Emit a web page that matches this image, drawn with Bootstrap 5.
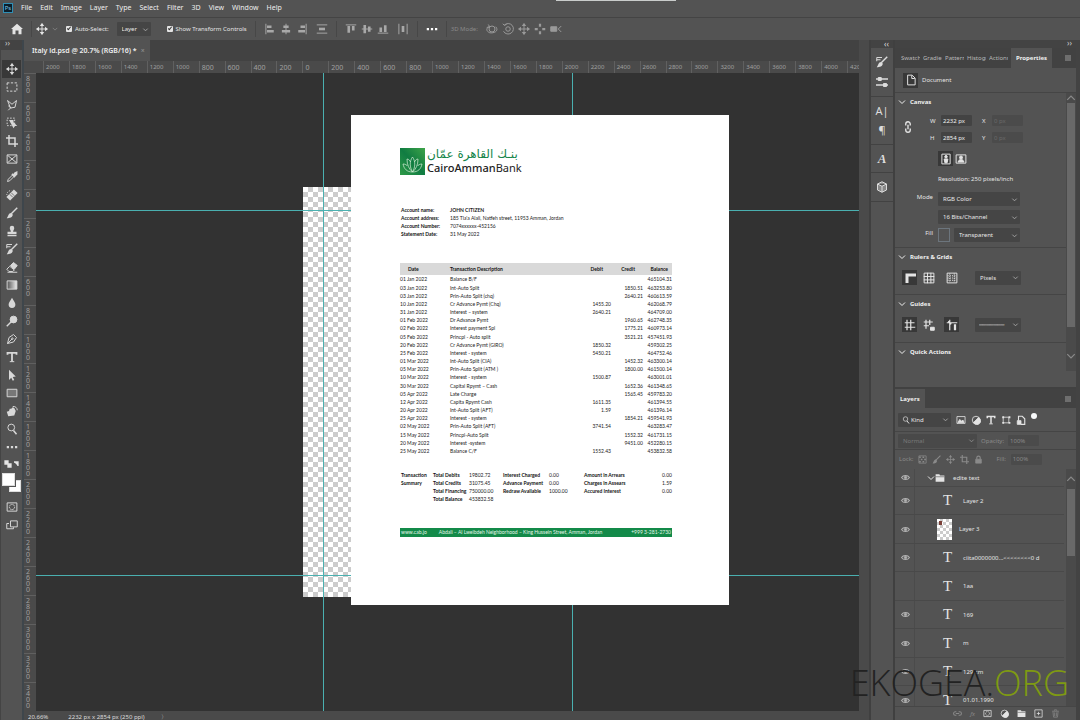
<!DOCTYPE html>
<html lang="en">
<head>
<meta charset="utf-8">
<meta name="viewport" content="width=device-width, initial-scale=1">
<title>Italy id.psd</title>
<link href="https://cdn.jsdelivr.net/npm/bootstrap@5.3.0/dist/css/bootstrap.min.css" rel="stylesheet">
<style>
:root{--ui:#535353;--edge:#434343;--well:#454545;--dark:#323232}
body{font-family:"Noto Sans","Open Sans",sans-serif;font-size:6px;line-height:10px;color:#e4e4e4;background:var(--edge)}
svg{display:block;fill:none;stroke:currentColor;stroke-width:1.3;flex:none}
.ic{width:12px;height:12px}
button{background:none;border:0;padding:0;color:inherit;font:inherit;line-height:inherit}
.bar-ui{background:var(--ui)}
.menu{height:18px;padding-left:3px;border-bottom:1px solid #444}
.menu a{font-size:7px;color:#eee;text-decoration:none;padding-right:1px;margin-right:7px}
.pslogo{width:10px;height:10px;background:#0b1e2c;border:1px solid #2f8fb5;color:#7cc8e8;line-height:8px;text-align:center;margin-right:8px}
.strip{left:556px;top:0;width:120px;height:1px;background:#c9cccb}
.options{height:23px;padding-left:11px}
.options .rule{width:1px;height:16px;background:#474747}
input[type=checkbox]{width:6px;height:6px;margin:0 3px 0 0;appearance:none;background:#e4e4e4;border-radius:1px;position:relative}
input[type=checkbox]:checked::after{content:"";position:absolute;left:2px;top:0;width:2px;height:4px;border:solid #333;border-width:0 1px 1px 0;transform:rotate(40deg)}
.pick{appearance:none;height:14px;border:0;border-radius:1px;padding:0 10px 0 5px;color:#e8e8e8;font:inherit;background:var(--well) url("data:image/svg+xml,%3Csvg xmlns='http://www.w3.org/2000/svg' viewBox='0 0 8 8'%3E%3Cpath d='M1.500 3l2.500 2.500L6.500 3' fill='none' stroke='%23aaa'/%3E%3C/svg%3E") no-repeat right 2px center/7px}
.dim{color:#8a8a8a!important}
.tools{width:24px;border-right:2px solid #3e464c;border-left:1px solid #444}
.grip{height:8px;background:var(--edge);color:#ccc;font-size:8px;line-height:6px}
.tools .grip{height:10px;margin-bottom:10px}
.tools button{width:19px;height:18px;display:flex;align-items:center;justify-content:center;color:#d8d8d8}
.tools button.on,.on{background:#383838}
.swatches{width:19px;height:22px;position:relative}
.swatches i{position:absolute;width:12px;height:12px;background:#fff;border:1px solid #ddd;left:7px;top:8px}
.swatches i+i{left:0;top:1px;width:13px;height:13px;box-shadow:0 0 0 1px var(--ui)}
.tabs{height:21px;background:#424242}
.doc-tab{background:var(--ui);padding:0 5px 0 8px;font-size:7px;font-weight:600;color:#eee}
.hruler{height:12px;background:#4a4a4a;color:#a0a0a0;overflow:hidden;padding-left:19px}
.hruler>div{margin-right:-14px}
.hruler span{flex:1 1 0;border-left:1px solid #606060;padding-left:2px;line-height:13px;min-width:0}
.hruler .big,.vruler span{font-size:7px}
.vruler{width:12px;background:#4a4a4a;color:#a0a0a0;overflow:hidden}
.vruler span{flex:1 1 0;border-top:1px solid #606060;min-height:0;line-height:6px;text-align:center;padding:2px 4px 0 0}
.vruler b{display:block;font-weight:400}
.work{background:var(--dark);overflow:hidden}
.checks{left:267px;top:114px;width:290px;height:410px;background:#fff repeating-conic-gradient(#ccc 0 25%,#fff 0 50%) 0 0/10px 10px}
.sheet{left:315px;top:42px;width:378px;height:490px;background:#fff;color:#222;font-family:Lato,"Noto Sans",sans-serif;font-size:5px;line-height:8px;padding:33px 57px 0 49px}
.guide-v{top:0;bottom:0;width:1px;background:#4ab0b0}
.guide-h{left:0;right:0;height:1px;background:#4ab0b0}
.brand-text{font-family:"Noto Sans",sans-serif;margin-left:2px;color:#222;font-size:11px;line-height:13px}
.brand-text b{font-weight:500}
.brand-ar{font-family:"DejaVu Sans",sans-serif;color:#16854a;font-size:12px;line-height:13px;white-space:nowrap;padding-right:4px}
.who{margin-top:31px;display:grid;grid-template-columns:49px auto;padding-left:1px}
.who dt,.who dd,.sum dt,.sum dd{margin:0}
.who dt,.sum dt{font-weight:700;color:#111}
.ledger{width:100%;height:192px;margin-top:25px;table-layout:fixed;border-collapse:collapse}
.ledger td,.ledger th{padding:0;white-space:nowrap}
.ledger th{background:#d9d9d9;height:12px;color:#111}
.sum{display:grid;grid-template-columns:32px 36px 34px 46px 35px 60px 1fr;margin:16px 0 0 1px}
.sheet-foot{background:#138a49;color:#e4f6ea;height:9px;line-height:9px;margin-top:25px;padding:0 1px}
.status{height:9px;background:#4a4a4a;line-height:13px;overflow:hidden;color:#ddd}
.gutter{width:12px;background:#4a4a4a;border-right:2px solid #404040}
.dock{width:24px;border-right:2px solid #404040}
.dock>div{border-bottom:1px solid #424242;display:flex;flex-direction:column;align-items:center;justify-content:space-evenly;color:#ddd}
.panel{width:181px;background:var(--ui)}
.props{height:339px;flex:none}
.ptabs{height:20px;background:#424242;color:#b8b8b8;padding-left:6px}
.ptabs button{width:19px;margin-right:3px;overflow:hidden;text-align:left;white-space:nowrap}
.ptabs .cur{background:var(--ui);color:#f0f0f0;font-weight:700;width:auto;padding:0 5px;margin:0}
.sect{border-bottom:1px solid #454545;padding-left:3px}
.sect h2{font-size:6px;line-height:10px;font-weight:700;margin:0;color:#f0f0f0;display:flex;align-items:center;gap:4px}
.num{width:31px;height:11px;border:0;background:#434343;color:#eee;font:inherit;padding:0 2px;border-radius:1px}
.num:disabled{background:#4b4b4b;color:#6a6a6a}
.size-grid{grid-template-columns:11px 41px 10px 34px;row-gap:6px;padding-top:4px}
.mode-grid{grid-template-columns:20px 82px;padding-left:15px;column-gap:5px;row-gap:4px}
.tile{width:15px;height:15px;display:flex;align-items:center;justify-content:center}
.track{width:10px;background:#4a4a4a}
.thumb{background:#696969;width:8px;margin-left:1px}
.rule-line{padding-left:4px;font-family:"DejaVu Sans",sans-serif}
.layer{height:29px;border-bottom:1px solid #494949;margin-right:2px}
.layer:nth-child(even){height:28px}
.layer.group{height:18px}
.layer .eye{width:20px;padding-left:2px;height:100%;border-right:1px solid #4b4b4b;display:flex;align-items:center;justify-content:center;color:#b4b4b4}
.tee{font-family:"Liberation Serif",serif;font-size:15px;line-height:15px;width:13px;text-align:center;margin:0 9px 0 26px}
.pic{width:15px;height:21px;margin:0 7px 0 22px;background:#fff repeating-conic-gradient(#ccc 0 25%,#fff 0 50%) 0 0/6px 6px}
.pic::before{content:"";display:block;width:3px;height:4px;background:#7a4038;margin:2px}
.gap-5px{gap:5px}
.mark-site{right:11px;bottom:15px;font-family:"Open Sans",sans-serif;font-weight:300;font-size:36px;line-height:44px;color:#222}
.mark-site span{color:#7f9a12}
</style>
</head>
<body class="vh-100 d-flex flex-column overflow-hidden position-relative">
<svg width="0" height="0" class="position-absolute"><defs>
<symbol id="move" viewBox="0 0 16 16"><path d="M8 1v14M1 8h14"/><path fill="currentColor" stroke="none" d="M8 0l3 4H5zM8 16l3-4H5zM0 8l4-3v6zM16 8l-4-3v6z"/></symbol>
<symbol id="slide" viewBox="0 0 16 16"><path stroke-width="3" d="M8 1v4M8 11v4M1 8h4M11 8h4"/></symbol>
<symbol id="marq" viewBox="0 0 16 16"><path stroke-dasharray="3 2" d="M1.500 2.500h13v11h-13z"/></symbol>
<symbol id="lasso" viewBox="0 0 16 16"><path d="M2 2l6 5 6-5-2 9-6 1zM6 12l-3 3M3 9l4 3"/></symbol>
<symbol id="objsel" viewBox="0 0 16 16"><path stroke-dasharray="2 2" d="M1.500 1.500h10v10h-10z"/><path fill="currentColor" stroke="none" d="M4 4h6v3l5 5-3 0-2 3z"/></symbol>
<symbol id="crop" viewBox="0 0 16 16"><path stroke-width="2" d="M4 0v12h12M0 4h12v12"/></symbol>
<symbol id="frame" viewBox="0 0 16 16"><path d="M1.500 2.500h13v11h-13zM2 3l12 10M14 3L2 13"/></symbol>
<symbol id="drop" viewBox="0 0 16 16"><path d="M2 14l1-3 6-6 2 2-6 6z"/><path fill="currentColor" d="M8 4l4 4M10 6l2-3 2-1 0 2-3 3z" stroke-width="2.500"/></symbol>
<symbol id="heal" viewBox="0 0 16 16"><path stroke-width="7" d="M3 13L13 3"/><path stroke="#555" stroke-width="1" d="M5 7l4 4M7 5l4 4"/><path stroke-dasharray="1.500 1.500" d="M1 8a6 6 0 016-6"/></symbol>
<symbol id="brush" viewBox="0 0 16 16"><path stroke-width="2" d="M15 1L7 9"/><path fill="currentColor" stroke="none" d="M7 8l2 2c0 4-4 5-8 5 2-2 2-7 6-7z"/></symbol>
<symbol id="stamp" viewBox="0 0 16 16"><path fill="currentColor" stroke="none" d="M8 1a3 3 0 013 3c0 2-1.500 3-1.500 5H14v3H2V9h4.500C6.500 7 5 6 5 4a3 3 0 013-3zM2 13h12v2H2z"/></symbol>
<symbol id="hist" viewBox="0 0 16 16"><use href="#brush"/><path d="M1 2h7M1 5h5M1 2v5"/></symbol>
<symbol id="erase" viewBox="0 0 16 16"><path d="M1 11l4-4 6 5-2 2H4z"/><path fill="currentColor" d="M6 6l4-4 5 4-4 5zM2 15h13"/></symbol>
<linearGradient id="gg"><stop stop-color="#555"/><stop offset="1" stop-color="#eee"/></linearGradient>
<symbol id="grad" viewBox="0 0 16 16"><path fill="url(#gg)" d="M1.500 2.500h13v11h-13z"/></symbol>
<symbol id="blur" viewBox="0 0 16 16"><path fill="currentColor" stroke="none" d="M8 1c2 4 4.500 6 4.500 9a4.500 4.500 0 01-9 0C3.500 7 6 5 8 1z"/></symbol>
<symbol id="dodge" viewBox="0 0 16 16"><circle cx="10" cy="6" r="4.500" fill="currentColor"/><path stroke-width="2" d="M7 9l-6 6"/></symbol>
<symbol id="pen" viewBox="0 0 16 16"><path d="M2 14l2-8 6-4 4 4-4 6zM2 14l6-6"/><circle cx="8.500" cy="7.500" r="1"/></symbol>
<symbol id="type" viewBox="0 0 16 16"><path stroke-width="2.400" d="M2 5V2.500h12V5M8 3v11"/><path d="M5 14.200h6"/></symbol>
<symbol id="arrow" viewBox="0 0 16 16"><path fill="currentColor" stroke="none" d="M4 1l9 9-4 .5 2 4-2 1-2-4-3 3z"/></symbol>
<symbol id="rect" viewBox="0 0 16 16"><path fill="#777" d="M1.500 3h13v10h-13z"/></symbol>
<symbol id="hand" viewBox="0 0 16 16"><path fill="currentColor" stroke="none" d="M3 15L1 9l3-1 1-3 2 0 2-2 2 1 2 4-2 6z"/><path d="M9 2a5 5 0 016 5"/></symbol>
<symbol id="lens" viewBox="0 0 16 16"><circle cx="7" cy="6" r="4.500"/><path stroke-width="2" d="M10 10l4 5"/></symbol>
<symbol id="dots" viewBox="0 0 16 16"><path stroke-width="3" stroke-dasharray="3 2.500" d="M1 8h15"/></symbol>
<symbol id="mask" viewBox="0 0 16 16"><path d="M1.500 2.500h13v11h-13z"/><circle cx="8" cy="8" r="3.500" stroke-dasharray="2 1"/></symbol>
<symbol id="screen" viewBox="0 0 16 16"><path d="M6 2.500h9v8H6zM4 6H1v7h9v-2"/></symbol>
<symbol id="home" viewBox="0 0 16 16"><path fill="currentColor" stroke="none" d="M8 1l8 7h-2v7h-4v-5H6v5H2V8H0z"/></symbol>
<symbol id="al" viewBox="0 0 16 16"><path d="M2.500 1v14"/><path stroke-width="3.500" d="M4 5h6M4 11h9"/></symbol>
<symbol id="ac" viewBox="0 0 16 16"><path d="M8 1v14"/><path stroke-width="3.500" d="M4.500 5h7M2.500 11h11"/></symbol>
<symbol id="dist" viewBox="0 0 16 16"><path d="M1 2.500h14M1 13.500h14"/><path stroke-width="3.500" d="M4 8h8"/></symbol>
<symbol id="orbit" viewBox="0 0 16 16"><circle cx="8" cy="8" r="4"/><path d="M13 5c5 6-3 9-8 8-5-2-5-6-1-8M3 2l2 3-4 1"/></symbol>
<symbol id="roll" viewBox="0 0 16 16"><circle cx="8" cy="8" r="3"/><path d="M3 3a7 7 0 11-1 8M1 1l2 2 3-1"/></symbol>
<symbol id="cam" viewBox="0 0 16 16"><path fill="currentColor" d="M1 5h8v6H1z"/><path d="M15 4l-4 4 4 4"/></symbol>
<symbol id="chev" viewBox="0 0 8 8"><path stroke-width="1" d="M1 2.500l3 3 3-3"/></symbol>
<symbol id="page" viewBox="0 0 16 16"><path d="M3.500 1.500h6l4 4v9h-10zM9 2v4h4"/></symbol>
<symbol id="eye" viewBox="0 0 16 16"><path stroke-width="1.800" d="M1 8c3-5 11-5 14 0-3 5-11 5-14 0z"/><circle cx="8" cy="8" r="2.200" fill="currentColor"/></symbol>
<symbol id="fold" viewBox="0 0 16 16"><path fill="currentColor" stroke="none" d="M1 2h6l1 2h7v10H1z"/><path stroke="#555" stroke-width="1" d="M1 6h14"/></symbol>
<symbol id="grid" viewBox="0 0 16 16"><path d="M1.500 1.500h13v13h-13zM6 1v14M10.500 1v14M1 6h14M1 10.500h14"/></symbol>
<symbol id="pixgrid" viewBox="0 0 16 16"><path d="M1.500 1.500h13v13h-13z"/><path stroke-dasharray="1.500 1.500" d="M2 5h12M2 8h12M2 11h12M5 2v12M11 2v12"/></symbol>
<symbol id="hash" viewBox="0 0 16 16"><path stroke-width="1.600" d="M4 1v14M9 1v14M1 5h13M1 11h14"/></symbol>
<symbol id="hashlock" viewBox="0 0 16 16"><path stroke-width="1.600" d="M4 1v12M9 1v7M1 4h12M1 9h7"/><path fill="currentColor" d="M10 11h5v4h-5z"/></symbol>
<symbol id="smart" viewBox="0 0 16 16"><path stroke-width="1.600" d="M5 1v14M1 5h14M3 3l4 4"/><path stroke-width="3" d="M12 7v8"/></symbol>
<symbol id="lock" viewBox="0 0 16 16"><path stroke-width="2" d="M5 8V5a3 3 0 016 0v3"/><path fill="currentColor" d="M3 7.500h10v7H3z"/></symbol>
<symbol id="smartobj" viewBox="0 0 16 16"><path stroke-width="1.800" d="M4 9V2h6l4 4v9H8"/><path fill="currentColor" d="M2 9h6v6H2z"/></symbol>
<symbol id="half" viewBox="0 0 16 16"><circle cx="8" cy="8" r="6"/><path fill="currentColor" d="M12 4a6 6 0 11-8 8z"/></symbol>
<symbol id="image" viewBox="0 0 16 16"><path d="M1.500 2.500h13v11h-13z"/><path fill="currentColor" d="M3 12l3-5 3 3 2-2 2 4z"/></symbol>
<symbol id="shape" viewBox="0 0 16 16"><path d="M3.500 3.500h9v9h-9z"/><path stroke-width="3" stroke-dasharray="3 7" d="M2 3.500h13M2 12.500h13"/></symbol>
<symbol id="check" viewBox="0 0 16 16"><path d="M1.500 1.500h13v13h-13z"/><path stroke-width="3" stroke-dasharray="3 3" d="M2 4h12M5 8h9M2 12h12"/></symbol>
<symbol id="cube" viewBox="0 0 16 16"><path fill="#888" d="M8 1l6 3v8l-6 3-6-3V4zM2 4l6 3 6-3M8 7v8"/></symbol>
<symbol id="link" viewBox="0 0 16 16"><path stroke-width="1.800" d="M6 5H4a3 3 0 000 6h2M10 5h2a3 3 0 010 6h-2M5 8h6"/></symbol>
<symbol id="trash" viewBox="0 0 16 16"><path d="M2 4h12M6 3V1.500h4V3M3.500 5l1 9.500h7l1-9.500M6.500 6v7M9.500 6v7"/></symbol>
<symbol id="plus" viewBox="0 0 16 16"><path d="M1.500 1.500h13v13h-13zM8 5v6M5 8h6"/></symbol>
<symbol id="man" viewBox="0 0 16 16"><path d="M2.500 1.500h11v13h-11z"/><circle cx="8" cy="5" r="1.700" fill="currentColor"/><path fill="currentColor" d="M5.500 8h5l-1 5h-3z"/></symbol>
<symbol id="bust" viewBox="0 0 16 16"><path d="M1.500 2.500h13v11h-13z"/><circle cx="8" cy="6" r="2" fill="currentColor"/><path fill="currentColor" d="M4 12l2-3h4l2 3z"/></symbol>
<symbol id="slid" viewBox="0 0 16 16"><path stroke-width="1.800" d="M0 4h16M0 12h16"/><path fill="currentColor" d="M3 2h4v4H3zM10 10h4v4h-4z"/></symbol>
<symbol id="burger" viewBox="0 0 16 16"><path stroke-width="1.500" d="M2 4h12M2 8h12M2 12h12"/></symbol>
</defs></svg>

<nav class="menu bar-ui d-flex align-items-center">
<span class="pslogo">Ps</span><a href="#">File</a><a href="#">Edit</a><a href="#">Image</a><a href="#">Layer</a><a href="#">Type</a><a href="#">Select</a><a href="#">Filter</a><a href="#">3D</a><a href="#">View</a><a href="#">Window</a><a href="#">Help</a>
</nav>
<div class="strip position-absolute"></div>

<div class="options bar-ui d-flex align-items-center">
<button aria-label="Home"><svg class="ic"><use href="#home"/></svg></button>
<span class="rule ms-2 me-1"></span>
<svg class="ic"><use href="#move"/></svg><svg width="6" height="6" class="ms-1 dim"><use href="#chev"/></svg>
<label class="d-flex align-items-center ms-2"><input type="checkbox" checked>Auto-Select:</label>
<select class="pick ms-2" aria-label="Auto-select target" style="width:34px"><option>Layer</option></select>
<label class="d-flex align-items-center ms-3"><input type="checkbox" checked>Show Transform Controls</label>
<span class="rule ms-2"></span>
<div class="d-flex align-items-center ms-2 gap-1" style="color:#a8a8a8">
<button aria-label="Align left"><svg class="ic"><use href="#al"/></svg></button>
<button aria-label="Align centre"><svg class="ic"><use href="#ac"/></svg></button>
<button aria-label="Align right"><svg class="ic" style="transform:scaleX(-1)"><use href="#al"/></svg></button>
<button aria-label="Distribute" class="ms-1"><svg class="ic"><use href="#dist"/></svg></button>
<span class="rule mx-1"></span>
<button aria-label="Align top"><svg class="ic" style="transform:rotate(90deg)"><use href="#al"/></svg></button>
<button aria-label="Align middle"><svg class="ic" style="transform:rotate(90deg)"><use href="#ac"/></svg></button>
<button aria-label="Align bottom"><svg class="ic" style="transform:rotate(-90deg)"><use href="#al"/></svg></button>
<button aria-label="Distribute across" class="ms-1"><svg class="ic" style="transform:rotate(90deg)"><use href="#dist"/></svg></button>
<span class="rule mx-1"></span>
<button aria-label="More" class="text-white"><svg class="ic"><use href="#dots"/></svg></button>
</div>
<span class="rule ms-2 me-1"></span>
<span class="dim">3D Mode:</span>
<div class="d-flex gap-1 ms-2" style="color:#9a9a9a"><svg class="ic"><use href="#orbit"/></svg><svg class="ic"><use href="#roll"/></svg><svg class="ic"><use href="#move"/></svg><svg class="ic"><use href="#slide"/></svg><svg class="ic"><use href="#cam"/></svg></div>
</div>

<main class="d-flex flex-fill" style="min-height:0">
<aside class="tools bar-ui d-flex flex-column align-items-center" id="tools">
<div class="grip w-100 ps-1">››</div>
<button class="on" aria-label="Move"><svg class="ic"><use href="#move"/></svg></button>
</aside>

<section class="flex-fill d-flex flex-column" style="min-width:0">
<div class="tabs d-flex"><div class="doc-tab d-flex align-items-center">Italy id.psd @ 20.7% (RGB/16) *<button class="dim ms-1" aria-label="Close">×</button></div></div>
<div class="hruler"><div class="d-flex" id="hr"></div></div>
<div class="d-flex flex-fill" style="min-height:0">
<div class="vruler d-flex flex-column" id="vr"></div>
<div class="work position-relative flex-fill">
<div class="checks position-absolute"></div>
<div class="guide-v position-absolute" style="left:287px"></div><div class="guide-v position-absolute" style="left:536px"></div>
<div class="guide-h position-absolute" style="top:137px"></div><div class="guide-h position-absolute" style="top:502px"></div>
<article class="sheet position-absolute">
<div class="d-flex">
<svg width="25" height="27" viewBox="0 0 25 27"><defs><linearGradient id="lg" x1="1" y1="0" x2="0" y2="1"><stop stop-color="#3ea449"/><stop offset=".5" stop-color="#107c42"/><stop offset="1" stop-color="#2f9a48"/></linearGradient></defs><path fill="url(#lg)" stroke="none" d="M0 0h25v27H0z"/><path stroke="#d9efd9" stroke-width=".7" d="M12.500 9c3 4 3 10 0 15-3-5-3-11 0-15zM7 11c0 6 2 10 5.500 13M18 11c0 6-2 10-5.500 13M7 11c2 0 3 2 3.500 3M18 11c-2 0-3 2-3.500 3M3 16c1 5 4 8 9.500 8 5.500 0 8.500-3 9.500-8-2 0-4 1-4.500 2M3 16c2 0 4 1 4.500 2"/></svg>
<div class="brand-text"><div class="brand-ar" lang="ar" dir="rtl">بنـك القاهرة عمّان</div><b>CairoAmman</b>Bank</div>
</div>
<dl class="who mb-0"><dt>Account name:</dt><dd><b>JOHN CITIZEN</b></dd><dt>Account address:</dt><dd>185 Tla'a Alali, Natfeh street, 11953 Amman, Jordan</dd><dt>Account Number:</dt><dd>7074xxxxxx-452156</dd><dt>Statement Date:</dt><dd>31 May 2022</dd></dl>
<table class="ledger"><colgroup><col style="width:50px"><col style="width:121px"><col style="width:40px"><col style="width:32px"><col></colgroup>
<thead><tr><th class="ps-2">Date</th><th>Transaction Description</th><th class="text-end pe-2">Debit</th><th class="text-end pe-2">Credit</th><th class="text-end pe-1">Balance</th></tr></thead><tbody id="rows"></tbody></table>
<dl class="sum mb-0"><dt>Transaction</dt><dt>Total Debits</dt><dd>19802.72</dd><dt>Interest Charged</dt><dd>0.00</dd><dt>Amount in Arrears</dt><dd class="text-end">0.00</dd>
<dt>Summary</dt><dt>Total Credits</dt><dd>31075.45</dd><dt>Advance Payment</dt><dd>0.00</dd><dt>Charges in Assears</dt><dd class="text-end">1.59</dd>
<dt></dt><dt>Total Financing</dt><dd>750000.00</dd><dt>Redraw Available</dt><dd>1000.00</dd><dt>Accured Interest</dt><dd class="text-end">0.00</dd>
<dt></dt><dt>Total Balance</dt><dd>453832.58</dd></dl>
<div class="sheet-foot d-flex"><span>www.cab.jo</span><span class="ms-2 ps-1">Abdali – Al Lweibdeh Neighborhood – King Hussein Street, Amman, Jordan</span><span class="ms-auto">+999 3-281-2730</span></div>
</article>
</div>
</div>
<div class="status d-flex"><span class="ps-1">20.66%</span><span class="ms-3 ps-1">2232 px x 2854 px (250 ppi)</span><span class="ms-3">〉</span></div>
</section>

<div class="gutter"></div>
<div class="dock bar-ui"><div class="grip border-0 align-items-end pe-1">‹‹</div>
<div style="height:49px"><svg class="ic"><use href="#hist"/></svg><svg class="ic"><use href="#slid"/></svg></div>
<div style="height:48px;font-size:11px"><span>A|</span><span>¶</span></div>
<div style="height:28px;font:italic bold 13px 'Liberation Serif',serif"><span>A</span></div>
<div style="height:29px"><svg class="ic"><use href="#cube"/></svg></div></div>

<aside class="d-flex flex-column" style="min-height:0">
<div class="grip text-end pe-1">››</div>
<section class="panel props d-flex flex-column">
<div class="ptabs d-flex"><button>Swatches</button><button>Gradients</button><button>Patterns</button><button>Histogram</button><button>Actions</button><button class="cur">Properties</button><svg class="ms-auto me-1 align-self-center" width="8" height="8"><use href="#burger"/></svg></div>
<div class="sect d-flex align-items-center ps-2" style="height:25px"><span class="tile on me-1"><svg class="ic"><use href="#page"/></svg></span>Document</div>
<div class="d-flex flex-fill"><div class="flex-fill">
<div class="sect pt-1" style="height:155px"><h2><svg width="8" height="8"><use href="#chev"/></svg>Canvas</h2>
<div class="d-flex pt-1"><svg class="ic align-self-center ms-1 me-1" style="transform:rotate(90deg)"><use href="#link"/></svg>
<div class="size-grid d-grid ms-2 ps-1 align-items-center"><label for="w">W</label><input id="w" class="num" value="2232 px"><label for="x">X</label><input id="x" class="num" value="0 px" disabled><label for="h">H</label><input id="h" class="num" value="2854 px"><label for="y">Y</label><input id="y" class="num" value="0 px" disabled></div></div>
<div style="padding-left:40px"><div class="d-flex mt-2"><button class="tile on" aria-label="Portrait"><svg class="ic"><use href="#man"/></svg></button><button class="tile" aria-label="Landscape"><svg class="ic"><use href="#bust"/></svg></button></div>
<div class="mt-2">Resolution: 250 pixels/inch</div></div>
<div class="mode-grid d-grid mt-2"><label for="mode" class="text-end">Mode</label><select id="mode" class="pick"><option>RGB Color</option></select><span></span><select class="pick" aria-label="Depth"><option>16 Bits/Channel</option></select><label for="fill" class="text-end">Fill</label><div class="d-flex"><span class="border border-secondary me-1" style="width:12px"></span><select id="fill" class="pick flex-fill"><option>Transparent</option></select></div></div>
</div>
<div class="sect pt-1" style="height:47px"><h2><svg width="8" height="8"><use href="#chev"/></svg>Rulers &amp; Grids</h2>
<div class="d-flex align-items-center ps-1 mt-2"><span class="tile on"><svg class="ic"><path stroke-width="3" d="M3 11V3h9"/></svg></span><span class="tile ms-1 me-2"><svg class="ic"><use href="#grid"/></svg></span><span class="tile"><svg class="ic"><use href="#pixgrid"/></svg></span><select class="pick ms-3" style="width:46px" aria-label="Units"><option>Pixels</option></select></div></div>
<div class="sect pt-1" style="height:48px"><h2><svg width="8" height="8"><use href="#chev"/></svg>Guides</h2>
<div class="d-flex align-items-center ps-1 mt-2"><span class="tile on"><svg class="ic"><use href="#hash"/></svg></span><span class="tile ms-1 me-2"><svg class="ic"><use href="#hashlock"/></svg></span><span class="tile on"><svg class="ic"><use href="#smart"/></svg></span><select class="pick rule-line ms-3" style="width:46px" aria-label="Line style"><option>───────</option></select></div></div>
<div class="sect border-0 pt-1"><h2><svg width="8" height="8"><use href="#chev"/></svg>Quick Actions</h2></div>
</div>
<div class="track mb-3"><svg width="10" height="10" style="transform:scaleY(-1)" class="dim"><use href="#chev"/></svg><div class="thumb" style="height:224px"></div><svg width="10" height="10" class="dim mt-4"><use href="#chev"/></svg></div></div>
</section>
<section class="panel d-flex flex-column flex-fill" style="min-height:0;border-top:2px solid #414141">
<div class="ptabs ps-0 d-flex"><button class="cur">Layers</button><svg class="ms-auto me-1 align-self-center" width="8" height="8"><use href="#burger"/></svg></div>
<div class="sect d-flex align-items-center gap-5px" style="height:25px"><svg width="8" height="8" class="position-absolute ms-1"><use href="#lens"/></svg><select class="pick" style="width:53px;padding-left:13px" aria-label="Filter kind"><option>Kind</option></select><svg width="10" height="10"><use href="#image"/></svg><svg width="10" height="10"><use href="#half"/></svg><svg width="10" height="10"><use href="#type"/></svg><svg width="10" height="10"><use href="#shape"/></svg><svg width="10" height="10"><use href="#smartobj"/></svg><span class="rounded-circle bg-light mb-2" style="width:6px;height:6px"></span></div>
<div class="sect d-flex align-items-center dim" style="height:18px"><select class="pick dim" disabled style="width:79px;opacity:.7" aria-label="Blend mode"><option>Normal</option></select><label class="ms-1 me-1" for="op">Opacity:</label><input id="op" class="num dim" disabled value="100%"></div>
<div class="d-flex align-items-center dim ps-1" style="height:20px;gap:1px"><span>Lock:</span><svg width="9" height="9" class="ms-1"><use href="#check"/></svg><svg width="9" height="9" class="ms-1"><use href="#brush"/></svg><svg width="9" height="9" class="ms-1"><use href="#move"/></svg><svg width="9" height="9" class="ms-1"><use href="#crop"/></svg><svg width="9" height="9" class="ms-1"><use href="#lock"/></svg><label for="fl" class="ms-2 ps-1 me-1">Fill:</label><input id="fl" class="num dim" disabled value="100%"></div>
<div class="d-flex flex-fill overflow-hidden" style="min-height:0"><div class="flex-fill" id="layers">
<div class="layer group d-flex align-items-center"><span class="eye"><svg width="9" height="9"><use href="#eye"/></svg></span><svg class="ms-2 ps-1" width="12" height="8"><use href="#chev"/></svg><svg width="10" height="10" class="me-2"><use href="#fold"/></svg>edite text</div></div>
<div class="track"><svg width="10" height="20" style="transform:scaleY(-1)" class="dim"><use href="#chev"/></svg><div class="thumb" style="height:67px"></div></div></div>
<div class="d-flex align-items-center justify-content-end gap-2 pe-3 flex-shrink-0" style="height:14px;border-top:1px solid #464646"><svg class="dim" width="9" height="9"><use href="#link"/></svg><i class="dim">fx</i><svg width="9" height="9"><use href="#mask"/></svg><svg width="9" height="9"><use href="#half"/></svg><svg width="9" height="9"><use href="#fold"/></svg><svg width="9" height="9"><use href="#plus"/></svg><svg class="dim" width="9" height="9"><use href="#trash"/></svg></div>
</section>
</aside>
<div style="width:4px"></div>
</main>
<div class="mark-site position-absolute">EKOGEA.<span>ORG</span></div>

<script>
const add=(id,html)=>document.getElementById(id).insertAdjacentHTML('beforeend',html);
const tools='marq lasso objsel crop frame drop heal brush stamp hist erase grad blur dodge pen type arrow rect hand lens dots'.split(' ');
const btn=t=>`<button aria-label="${t}"><svg class="ic"><use href="#${t}"/></svg></button>`;
add('tools',tools.map(btn).join('')+'<svg width="16" height="8" class="mt-1"><path fill="currentColor" d="M1 1h3v3H1zM4 4h3v3H4zM10 2h4v4"/></svg><div class="swatches mt-1 mb-1"><i></i><i></i></div>'+btn('mask')+btn('screen'));
for(let v=-2000;v<=4200;v+=200){const a=Math.abs(v);add('hr',`<span class="${a<1000?'big':''}">${a}</span>`)}
for(let v=-800;v<=3400;v+=200)add('vr','<span>'+[...String(Math.abs(v))].map(c=>`<b>${c}</b>`).join('')+'</span>');
const rows=`01 Jan 2022|Balance B/F|||465104.31
03 Jan 2022|Int-Auto Split||1850.51|463253.80
03 Jan 2022|Prin-Auto Split (chq)||2640.21|460613.59
10 Jan 2022|Cr Advance Pymt (Chq)|1455.20||462068.79
31 Jan 2022|Interest – system|2640.21||464709.00
01 Feb 2022|Dr Advance Pymt||1960.65|462748.35
02 Feb 2022|Interest payment Spl||1775.21|460973.14
05 Feb 2022|Princpl  - Auto split||3521.21|457451.93
20 Feb 2022|Cr Advance Pymt (GIRO)|1850.32||459302.25
25 Feb 2022|Interest  - system|5450.21||464752.46
01 Mar 2022|Int-Auto Split (CIA)||1452.32|463300.14
05 Mar 2022|Prin-Auto Split (ATM )||1800.00|461500.14
10 Mar 2022|Interest  - system|1500.87||463001.01
30 Mar 2022|Capital Rpymt – Cash||1652.36|461348.65
05 Apr 2022|Late Charge||1565.45|459783.20
12 Apr 2022|Capita Rpymt Cash|1611.35||461394.55
20 Apr 2022|Int-Auto Split (AFT)|1.59||461396.14
25 Apr 2022|Interest - system||1854.21|459541.93
02 May 2022|Prin-Auto Split (AFT)|3741.54||463283.47
15 May 2022|Princpl-Auto Split||1552.32|461731.15
20 May 2022|Interest -system||9451.00|452280.15
25 May 2022|Balance C/F|1552.43||453832.58`.split('\n');
add('rows',rows.map(r=>'<tr>'+r.split('|').map((c,i)=>`<td class="${i>1?'text-end':''}">${c}</td>`).join('')+'</tr>').join(''));
['Layer 2','Layer 3','ciita0000000...<<<<<<<<0 d','1aa','169','m','129 cm','01.01.1990'].forEach((n,i)=>add('layers',`<div class="layer d-flex align-items-center"><span class="eye">${i==3?'':'<svg width="9" height="9"><use href="#eye"/></svg>'}</span><span class="${i==1?'pic':'tee'}">${i==1?'':'T'}</span><span class="text-nowrap">${n.replace(/</g,'&lt;')}</span></div>`));
</script>
<script src="https://cdn.jsdelivr.net/npm/bootstrap@5.3.0/dist/js/bootstrap.bundle.min.js"></script>
</body>
</html>
